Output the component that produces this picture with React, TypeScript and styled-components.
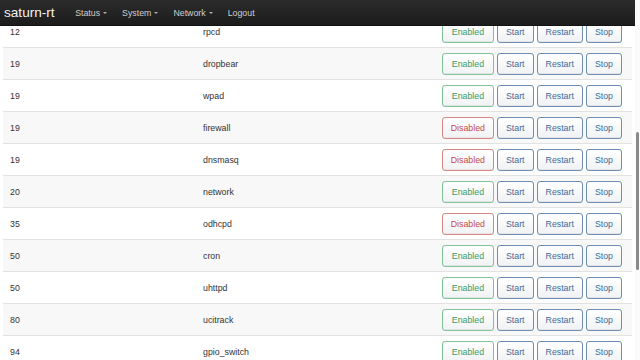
import React from "react";
import styled, { createGlobalStyle } from "styled-components";

const Global = createGlobalStyle`
  html, body { margin: 0; padding: 0; width: 640px; height: 360px; overflow: hidden; background: #fff; }
  body { font-family: "Liberation Sans", Arial, sans-serif; font-size: 8.8px; color: #333; }
  * { box-sizing: border-box; }
`;

const Shell = styled.div`
  display: flex;
  width: 640px;
  height: 360px;
  overflow: hidden;
`;

const Main = styled.div`
  position: relative;
  width: 635px;
  height: 360px;
  overflow: hidden;
`;

const Navbar = styled.nav`
  position: absolute;
  top: 0;
  left: 0;
  right: 0;
  height: 26px;
  z-index: 2;
  display: flex;
  align-items: center;
  padding-left: 4px;
  background: linear-gradient(#2c2c2c, #1c1c1c);
  border-bottom: 1px solid #111;
`;

const Brand = styled.span`
  font-size: 13.6px;
  color: #f2f2f2;
  margin-right: 13px;
`;

const NavItem = styled.span`
  display: flex;
  align-items: center;
  gap: 3px;
  color: #cfcfcf;
  padding: 0 7.5px;
`;

const Caret = styled.span`
  width: 0;
  height: 0;
  border-left: 2.5px solid transparent;
  border-right: 2.5px solid transparent;
  border-top: 2.5px solid #b0b0b0;
  margin-top: 1px;
`;

const Table = styled.div`
  margin: 15px 3px 0 3px;
  display: flex;
  flex-direction: column;
`;

const Row = styled.div<{ $striped: boolean }>`
  display: grid;
  grid-template-columns: 193px 1fr auto;
  align-items: center;
  height: 32px;
  padding: 0 10px 0 7px;
  border-top: 1px solid #e2e2e2;
  background: ${(p) => (p.$striped ? "#f8f8f8" : "#fff")};
`;

const Cell = styled.span`
  color: #333;
`;

const Buttons = styled.div`
  display: flex;
  gap: 3px;
`;

const Btn = styled.button<{ $kind: "ok" | "bad" | "act" }>`
  height: 22px;
  padding: 0 8px;
  min-width: ${(p) => (p.$kind === "act" ? "0" : "52px")};
  font-family: inherit;
  font-size: 8.8px;
  border-radius: 3px;
  background: linear-gradient(#ffffff, #f0f2f4);
  border: 1px solid
    ${(p) => (p.$kind === "ok" ? "#7fc39a" : p.$kind === "bad" ? "#d88585" : "#6d8fb3")};
  color: ${(p) => (p.$kind === "ok" ? "#3a9a60" : p.$kind === "bad" ? "#c64a4a" : "#3e6a98")};
  box-shadow: inset 0 -1px 0 rgba(0, 0, 0, 0.05);
`;

const ScrollTrack = styled.div`
  width: 5px;
  height: 360px;
  background: #fafafa;
  display: flex;
  flex-direction: column;
  align-items: center;
`;

const ScrollThumb = styled.div`
  width: 3px;
  height: 138px;
  margin-top: 132px;
  border-radius: 2px;
  background: #8a8a8a;
`;

type Svc = { n: number; name: string; enabled: boolean };

const services: Svc[] = [
  { n: 12, name: "rpcd", enabled: true },
  { n: 19, name: "dropbear", enabled: true },
  { n: 19, name: "wpad", enabled: true },
  { n: 19, name: "firewall", enabled: false },
  { n: 19, name: "dnsmasq", enabled: false },
  { n: 20, name: "network", enabled: true },
  { n: 35, name: "odhcpd", enabled: false },
  { n: 50, name: "cron", enabled: true },
  { n: 50, name: "uhttpd", enabled: true },
  { n: 80, name: "ucitrack", enabled: true },
  { n: 94, name: "gpio_switch", enabled: true },
];

export default function App() {
  return (
    <>
      <Global />
      <Shell>
        <Main>
          <Navbar>
            <Brand>saturn-rt</Brand>
            <NavItem>Status <Caret /></NavItem>
            <NavItem>System <Caret /></NavItem>
            <NavItem>Network <Caret /></NavItem>
            <NavItem>Logout</NavItem>
          </Navbar>
          <Table>
            {services.map((s, i) => (
              <Row key={s.name} $striped={i % 2 === 1}>
                <Cell>{s.n}</Cell>
                <Cell>{s.name}</Cell>
                <Buttons>
                  <Btn $kind={s.enabled ? "ok" : "bad"}>{s.enabled ? "Enabled" : "Disabled"}</Btn>
                  <Btn $kind="act">Start</Btn>
                  <Btn $kind="act">Restart</Btn>
                  <Btn $kind="act">Stop</Btn>
                </Buttons>
              </Row>
            ))}
          </Table>
        </Main>
        <ScrollTrack>
          <ScrollThumb />
        </ScrollTrack>
      </Shell>
    </>
  );
}
